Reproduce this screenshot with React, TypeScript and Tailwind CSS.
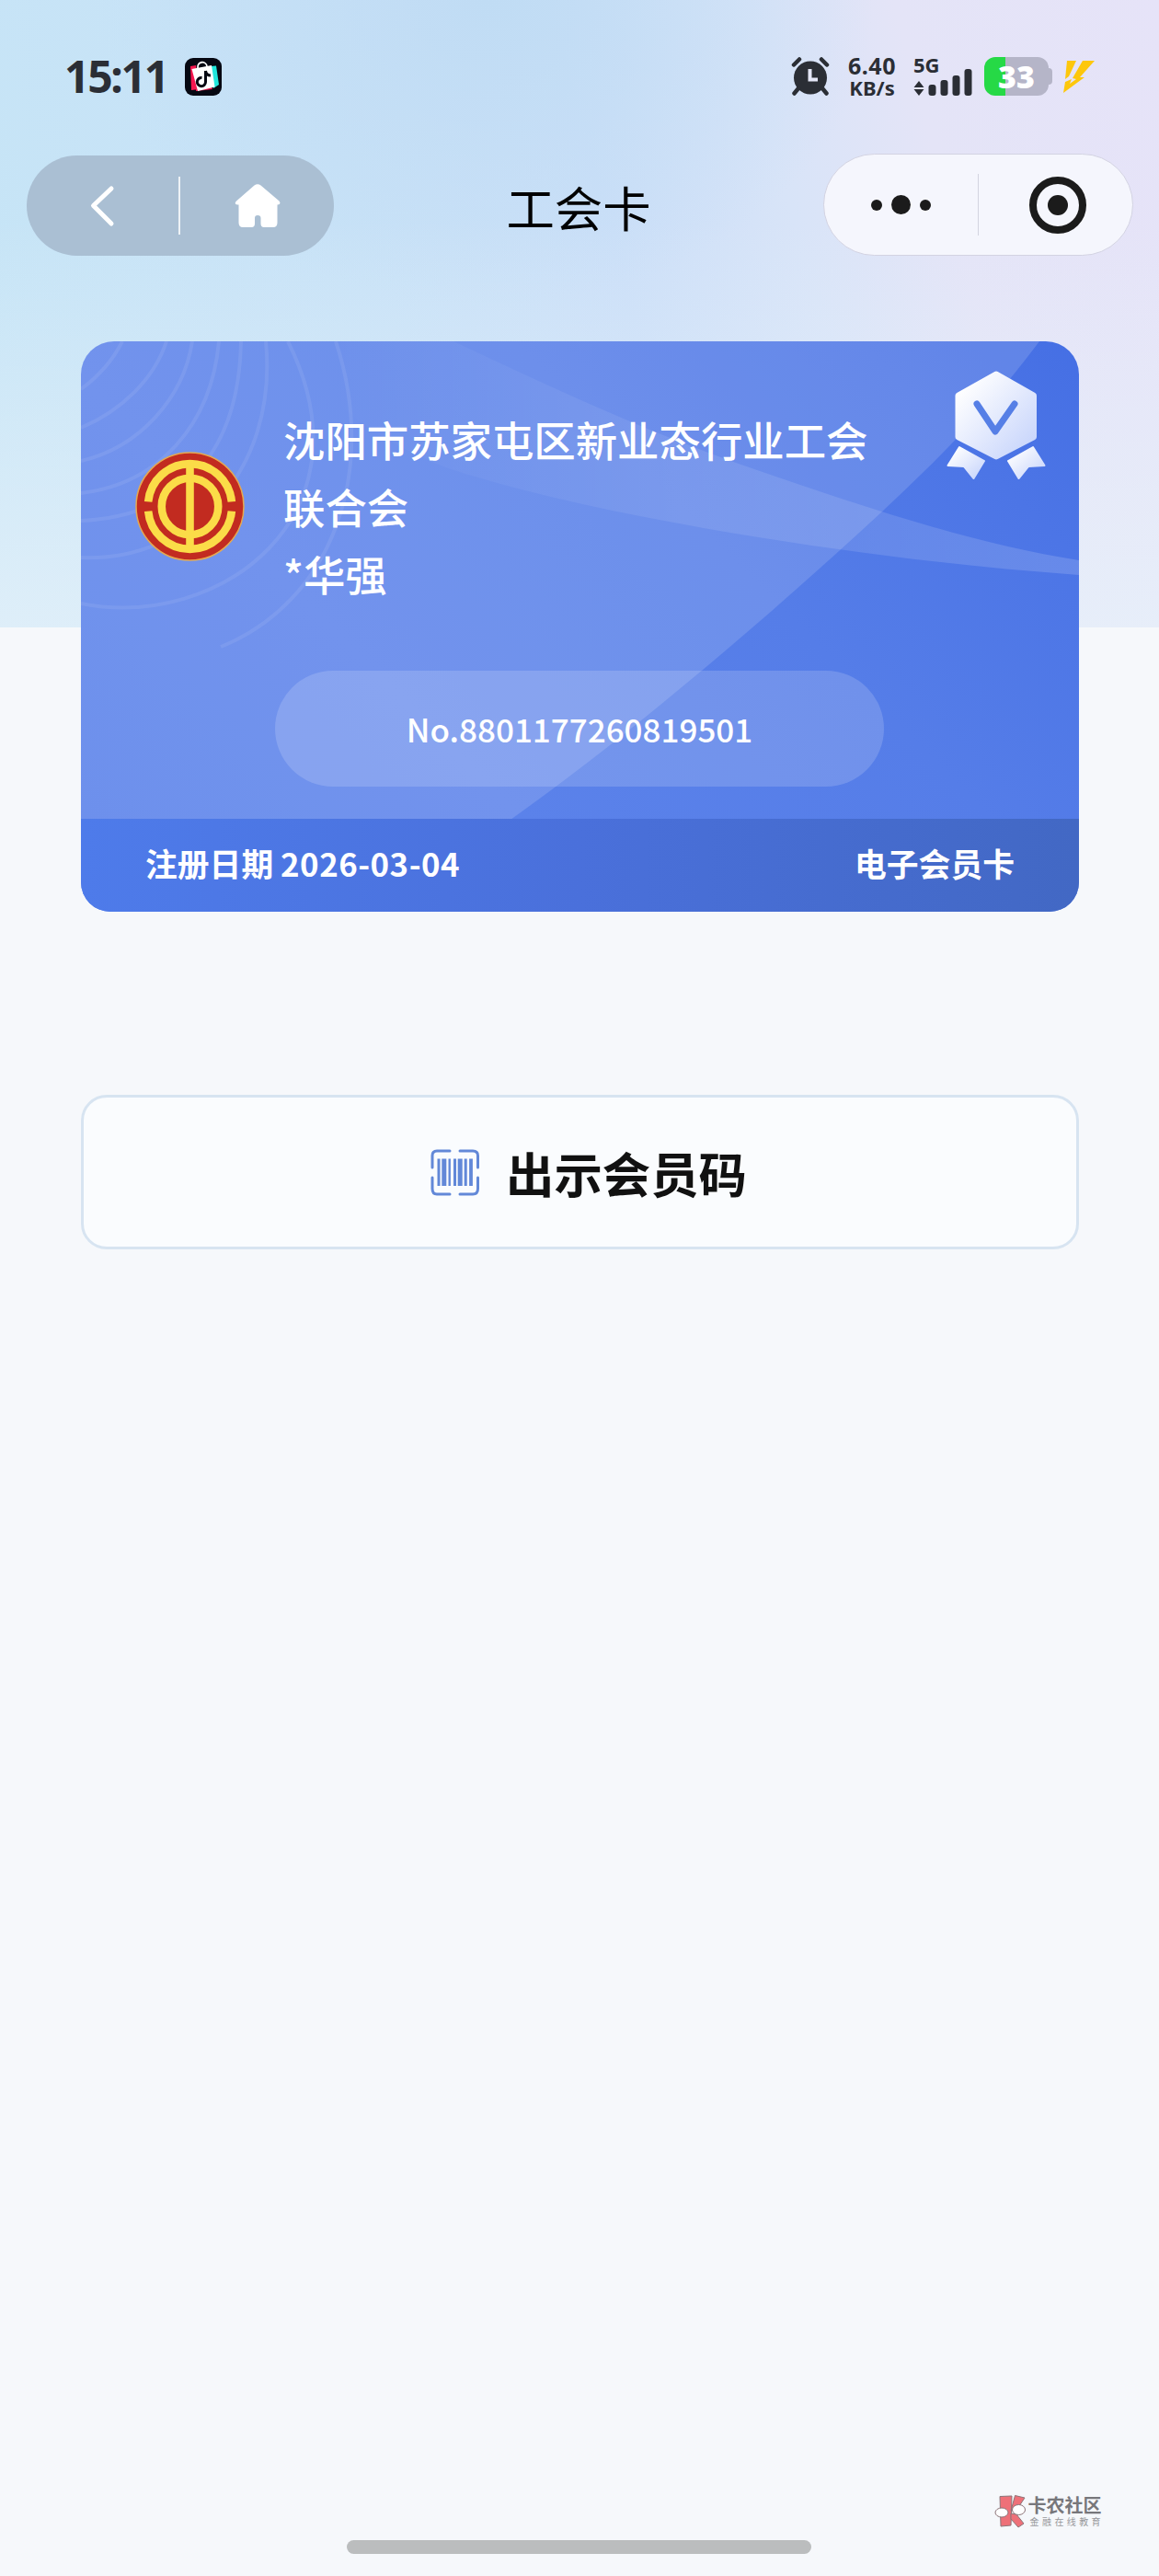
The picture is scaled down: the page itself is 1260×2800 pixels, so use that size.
import type { ReactNode } from "react";

function AlarmIcon() {
  return (
    <svg width="42" height="42" viewBox="0 0 42 42" fill="none">
      <circle cx="21" cy="22.500" r="18" fill="#2b2e35" />
      <path d="M3 8.500 L9 2.500 M39 8.500 L33 2.500" stroke="#2b2e35" strokeWidth="4.500" strokeLinecap="round" />
      <path d="M8 34 L3.500 39.500 M34 34 L38.500 39.500" stroke="#2b2e35" strokeWidth="4.500" strokeLinecap="round" />
      <path d="M20.500 13 V24.500 H29" stroke="#e4e6f6" strokeWidth="4" />
    </svg>
  );
}

function ShopIcon() {
  return (
    <svg width="40" height="41" viewBox="0 0 40 41" fill="none">
      <rect width="40" height="41" rx="9" fill="#060812" />
      <path d="M6 9 L12 8 L15 34 L7 35 Z" fill="#f5164f" />
      <path d="M28 9 L34 8.500 L37 29 L31 33 Z" fill="#21e6dc" />
      <path d="M12 36 L30 34 L29 32 L12 33 Z" fill="#f5164f" />
      <path d="M7.500 12 L29 8 L32.500 31.500 L14 36 Z" fill="#fff" />
      <path d="M14 11 C13 3 23 3 24 9" stroke="#fff" strokeWidth="1.800" />
      <path d="M22.500 14 V26 A4.600 4.600 0 1 1 18.500 21.500" stroke="#060812" strokeWidth="3" />
      <path d="M22.500 14 C23 17.500 25 19 28 19" stroke="#060812" strokeWidth="3" />
    </svg>
  );
}

function SignalIcon() {
  return (
    <svg width="64" height="30" viewBox="0 0 64 30" fill="#2b2e35">
      <path d="M6 14 L11.500 21 H0.500 Z M6 30 L11.500 23 H0.500 Z" />
      <rect x="16.500" y="18" width="8" height="12" rx="3" />
      <rect x="29.500" y="13" width="8" height="17" rx="3" />
      <rect x="42.500" y="8" width="8" height="22" rx="3" />
      <rect x="55.500" y="1" width="8" height="29" rx="3" />
    </svg>
  );
}

function StatusBar() {
  return (
    <div className="flex h-[167px] items-start justify-between pt-[62px] pl-[70px] pr-[70px] text-[#2b2e35]">
      <div className="flex items-center">
        <span className="w-[131px] whitespace-nowrap font-[Noto_Sans] text-[48px] leading-[42px] font-bold tracking-[-2.300px]">
          15:11
        </span>
        <ShopIcon />
      </div>
      <div className="flex items-start">
        <AlarmIcon />
        <div className="-mt-px ml-[16px] flex w-[60px] flex-col items-center whitespace-nowrap font-[Noto_Sans] font-bold">
          <span className="text-[25px] leading-[21px] tracking-[0.500px]">6.40</span>
          <span className="text-[22px] leading-[26px]">KB/s</span>
        </div>
        <div className="ml-[15px] flex w-[64px] flex-col">
          <span className="h-[12px] font-[Noto_Sans] text-[22px] leading-[17px] font-bold">5G</span>
          <SignalIcon />
        </div>
        <div className="ml-[13px] flex items-center">
          <div className="flex h-[42px] w-[70px] items-center justify-center rounded-xl bg-[linear-gradient(90deg,#26d946_33%,#b5b5c8_33%)] font-[Noto_Sans] text-[34px] leading-none font-black text-white">
            33
          </div>
          <div className="h-[18px] w-[4px] rounded-r-sm bg-[#b5b5c8]" />
        </div>
        <svg className="mt-[4px] ml-[11px]" width="35" height="35" viewBox="0 0 35 35" fill="#fdc70c">
          <path d="M5 0 H15 L7 17 L3 20 Z" />
          <path d="M22 0 H35 L19 18 H24 L1 35 L3 23 L10 20 L8 25 L15 20 L11 19 Z" />
        </svg>
      </div>
    </div>
  );
}

function NavBar() {
  return (
    <nav className="flex h-[111px] items-start justify-between pr-[28px] pl-[29px]">
      <div className="mt-[2px] flex h-[109px] w-[334px] items-center rounded-full bg-[#aabfd3]">
        <svg className="ml-[67px]" width="30" height="48" viewBox="0 0 30 48" fill="none">
          <path d="M25 5 L5.500 23.500 L25 43" stroke="#fff" strokeWidth="5" strokeLinecap="round" strokeLinejoin="round" />
        </svg>
        <div className="ml-[68px] h-[63px] w-[2px] bg-white/80" />
        <svg className="ml-[59px]" width="50" height="48" viewBox="0 0 50 48" fill="#fff">
          <path d="M21.500 1.500 Q25 -1 28.500 1.500 L48.500 18.500 Q51 22 47 22.500 H46.500 V42 Q46.500 47 42 47 H32 Q28.500 47 28.500 43 V37 Q28.500 34 25 34 Q22 34 22 37 V43 Q22 47 18.500 47 H9 Q4.500 47 4.500 42 V22.500 H3 Q-1 22 2 18.500 Z" />
        </svg>
      </div>
      <h1 className="mt-[19px] font-['Noto_Sans_CJK_SC',sans-serif] text-[52.400px] leading-[76px] text-black">工会卡</h1>
      <div className="flex h-[111px] w-[337px] items-center rounded-full border border-[#d3d3e2] bg-[#f5f6fd]">
        <div className="ml-[51px] flex items-center gap-[10px]">
          <i className="size-[12px] rounded-full bg-[#1b1b1b]" />
          <i className="size-[21px] rounded-full bg-[#1b1b1b]" />
          <i className="size-[12px] rounded-full bg-[#1b1b1b]" />
        </div>
        <div className="ml-[51px] h-[67px] w-px bg-[#d3d4e0]" />
        <div className="ml-[55px] flex size-[62px] items-center justify-center rounded-full border-8 border-[#1b1b1b]">
          <i className="size-[22px] rounded-full bg-[#1b1b1b]" />
        </div>
      </div>
    </nav>
  );
}

function CardArtwork() {
  return (
    <svg className="absolute inset-0" width="1085" height="620" viewBox="0 0 1085 620" fill="none">
      <defs>
        <linearGradient id="band" x1="0" y1="0" x2="1" y2="0">
          <stop offset="0.050" stopColor="#fff" stopOpacity="0" />
          <stop offset="0.500" stopColor="#fff" stopOpacity="0.090" />
          <stop offset="1" stopColor="#fff" stopOpacity="0.150" />
        </linearGradient>
      </defs>
      <path
        d="M0 0 H1042 C990 70 930 130 870 186 C740 306 600 425 467 520 H0 Z"
        fill="#fff"
        fillOpacity="0.140"
      />
      <path
        d="M405 0 C500 45 600 92 712 132 C850 180 970 220 1085 238 V254 C960 245 840 230 712 209 C600 190 500 170 402 139 C310 105 250 50 225 0 Z"
        fill="url(#band)"
      />
      <g stroke="#fff" strokeOpacity="0.080" strokeWidth="4">
        <path d="M45 0 Q30 30 0 52" />
        <path d="M93 0 C80 40 45 75 0 94" />
        <path d="M121 0 C112 60 65 115 0 130" />
        <path d="M150 0 C142 90 85 155 0 165" />
        <path d="M174 0 C172 120 110 190 0 195" />
        <path d="M201 0 C215 145 115 240 0 235" />
        <path d="M225 0 C320 190 150 315 0 285" />
        <path d="M277 0 C325 145 270 285 152 332" />
      </g>
    </svg>
  );
}

function UnionEmblem() {
  return (
    <svg className="shrink-0" width="119" height="119" viewBox="0 0 118 118" fill="none">
      <circle cx="59" cy="59" r="58" fill="#c22b20" stroke="#e5a850" strokeWidth="1.500" />
      <g stroke="#fbdc48" strokeWidth="8.500">
        <path d="M14 54 A45.200 45.200 0 0 1 104 54" />
        <path d="M14 64 A45.200 45.200 0 0 0 104 64" />
        <circle cx="59" cy="59" r="30.500" />
        <path d="M59 11 V107" />
      </g>
    </svg>
  );
}

function Medal() {
  return (
    <svg className="absolute top-[31px] right-[36px]" width="108" height="121" viewBox="0 0 108 121" fill="none">
      <defs>
        <linearGradient id="medal" x1="0" y1="0" x2="1" y2="1">
          <stop offset="0.100" stopColor="#fff" />
          <stop offset="1" stopColor="#c4d2fb" />
        </linearGradient>
      </defs>
      <g fill="url(#medal)" stroke="url(#medal)" strokeLinejoin="round">
        <path d="M54 5 L94.500 28 V73 L54 94 L13 73 V28 Z" strokeWidth="7" />
        <path d="M14 84 L41 99 L29.500 118 L19 105 L1.500 104 Z" strokeWidth="2" />
        <path d="M94 84 L67 99 L78.500 118 L89 105 L106.500 104 Z" strokeWidth="2" />
      </g>
      <path d="M33 37 L53 67 L74 37" stroke="#567fe6" strokeWidth="7" strokeLinecap="round" strokeLinejoin="round" />
    </svg>
  );
}

function MemberCard() {
  return (
    <section className="relative mt-[93px] ml-[88px] flex h-[620px] w-[1085px] flex-col overflow-hidden rounded-t-[36px] rounded-b-[32px] bg-[linear-gradient(225deg,#456fe4_0%,#4c75e6_14%,#557de8_36%,#5b82ea_66%,#557de9_100%)]">
      <CardArtwork />
      <Medal />
      <div className="relative flex h-[358px] pl-[59px]">
        <div className="mt-[120px]">
          <UnionEmblem />
        </div>
        <div className="mt-[70px] ml-[42px] w-[650px] text-[45.400px] leading-[73px] font-medium text-white">
          <p>沈阳市苏家屯区新业态行业工会联合会</p>
          <p>*华强</p>
        </div>
      </div>
      <div className="relative ml-[211px] flex h-[126px] w-[662px] items-center justify-center rounded-full bg-white/16 pb-[2px] text-[35px] leading-none font-medium text-white">
        <span>No.8801177260819501</span>
      </div>
      <footer className="relative mt-auto flex h-[101px] items-center justify-between bg-[linear-gradient(90deg,#4e7bea,#4a70db_50%,#4268c4)] pr-[70px] pb-[5px] pl-[70px] text-[34.800px] leading-none font-bold text-white">
        <span>
          注册日期 <span className="tracking-[0.500px]">2026-03-04</span>
        </span>
        <span>电子会员卡</span>
      </footer>
    </section>
  );
}

function ScanFrame({ children }: { children: ReactNode }) {
  return (
    <svg width="54" height="51" viewBox="0 0 54 51" fill="none" stroke="#6288d8" strokeWidth="3">
      <path d="M2 20 V7 Q2 2 7 2 H21" strokeLinecap="round" />
      <path d="M32 2 H46 Q51.500 2 51.500 7 V20" strokeLinecap="round" />
      <path d="M2 31 V43 Q2 49 7 49 H21" strokeLinecap="round" />
      <path d="M32 49 H46 Q51.500 49 51.500 43 V31" strokeLinecap="round" />
      {children}
    </svg>
  );
}

function ShowCodeButton() {
  return (
    <button className="mt-[199px] ml-[88px] flex h-[168px] w-[1085px] items-center rounded-[28px] border-[3px] border-[#d7e4f1] bg-[#fafcfe] pl-[377px] text-[52.400px] leading-none font-bold text-[#111]">
      <ScanFrame>
        <path d="M9 10.500 V40 M26.500 10.500 V40 M38.200 10.500 V40" strokeWidth="3" />
        <path d="M14.800 10.500 V40 M32.200 10.500 V40" strokeWidth="5" />
        <path d="M20.700 10.500 V40" strokeWidth="2.400" />
        <path d="M44 10.500 V40" strokeWidth="3.800" />
      </ScanFrame>
      <span className="mt-px ml-[28px]">出示会员码</span>
    </button>
  );
}

function Watermark() {
  return (
    <div className="flex items-center">
      <svg width="36" height="36" viewBox="0 0 36 36" fill="#ee7078" stroke="#8c7478" strokeWidth="1">
        <path d="M6 1.500 L19 1 L18 33 L7 34 Z" />
        <path d="M22.500 0.500 L33 3 L25 15 L18 17 Z" />
        <path d="M18 20 L24 21 L32 31 L26 35 L18 26 Z" />
        <ellipse cx="8" cy="19" rx="7" ry="5" fill="#fff" />
        <ellipse cx="26.500" cy="16" rx="7" ry="5.500" fill="#fff" />
      </svg>
      <div className="ml-px flex flex-col whitespace-nowrap">
        <span className="text-[20px] leading-[20px] font-bold text-[#77777b]">卡农社区</span>
        <span className="mt-[2px] ml-[2px] text-[10px] leading-[12px] tracking-[3.400px] text-[#98989c]">金融在线教育</span>
      </div>
    </div>
  );
}

export default function App() {
  return (
    <main className="flex h-[2800px] w-[1260px] flex-col bg-[#f6f8fb] bg-[linear-gradient(180deg,transparent_35%,#e8f2fab3_100%),radial-gradient(ellipse_420px_330px_at_42%_0%,#c0dcf4_0%,#c0dcf400_100%),linear-gradient(75deg,#c6e5f6_0%,#c8e2f7_35%,#cbdff8_54%,#d8e4f8_68%,#e4e4f7_80%,#e6e3f8_100%)] bg-[length:1260px_682px] bg-no-repeat font-['Noto_Sans_CJK_SC',sans-serif]">
      <StatusBar />
      <NavBar />
      <MemberCard />
      <ShowCodeButton />
      <div className="mt-auto flex justify-end pr-[60px]">
        <Watermark />
      </div>
      <div className="mt-[13px] mb-[24px] ml-[377px] h-[15px] w-[505px] rounded-full bg-[#bbbdbe]" />
    </main>
  );
}
